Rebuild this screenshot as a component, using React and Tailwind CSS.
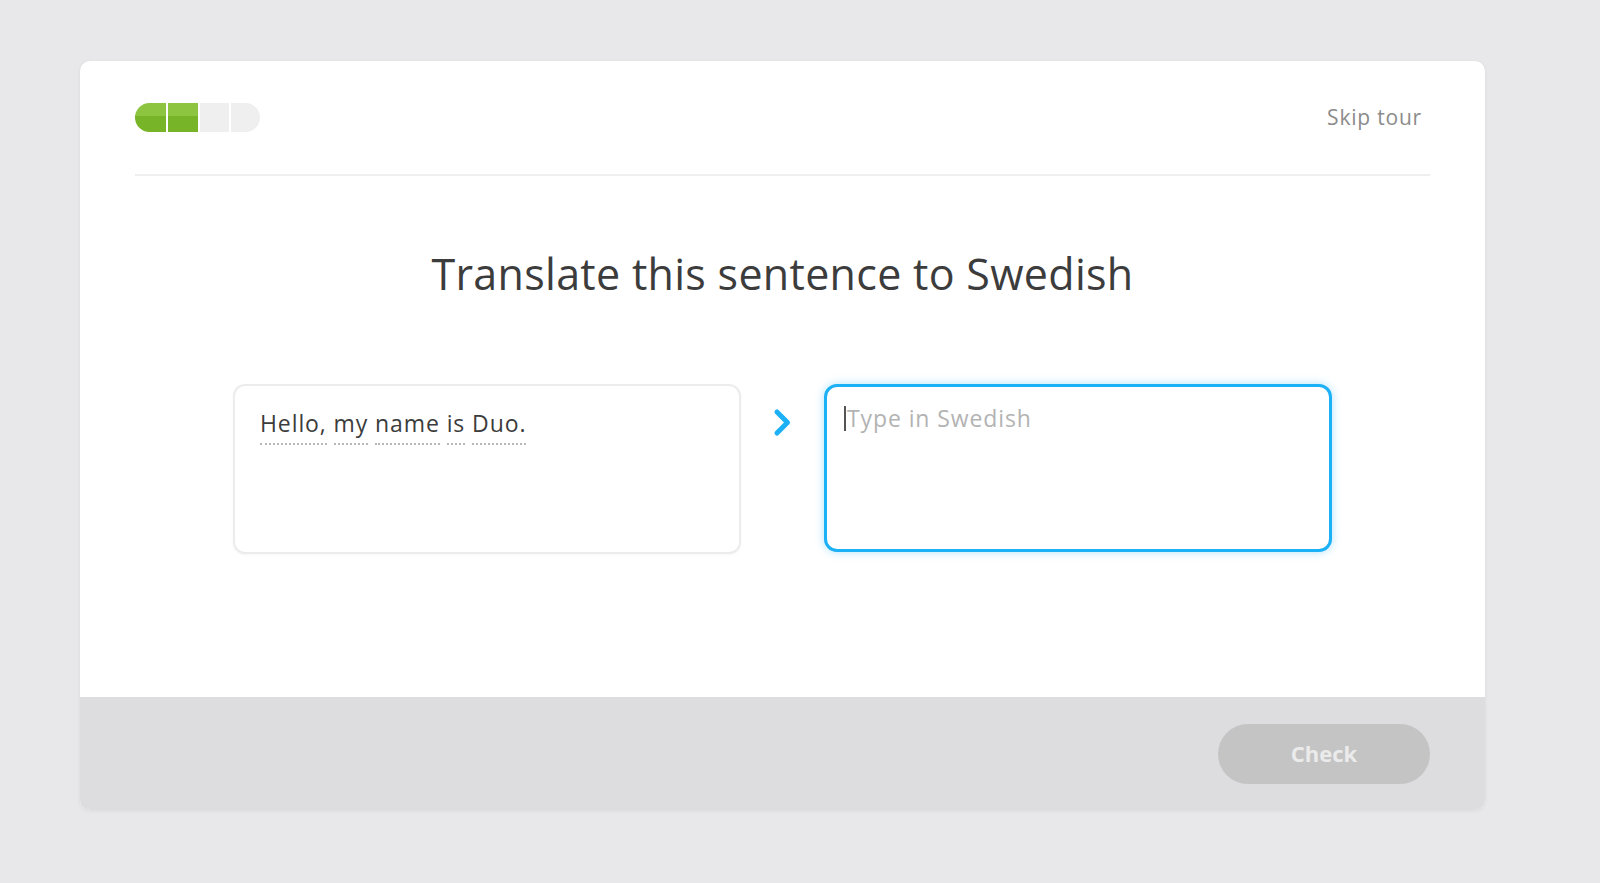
import React from "react";

const font = { fontFamily: "'Open Sans', Lato, 'Noto Sans', sans-serif" };

function Progress() {
  return (
    <div className="flex h-[29px] w-[125px] gap-[2px] overflow-hidden rounded-full">
      <div className="h-full w-[31px] bg-[linear-gradient(to_bottom,#8dc541_0%,#8dc541_45%,#78b427_45%,#78b427_100%)]" />
      <div className="h-full w-[30px] bg-[linear-gradient(to_bottom,#8dc541_0%,#8dc541_45%,#78b427_45%,#78b427_100%)]" />
      <div className="h-full w-[29px] bg-[#efefef]" />
      <div className="h-full w-[29px] bg-[#efefef]" />
    </div>
  );
}

function Word({ children }) {
  return (
    <span className="border-b-[2px] border-dotted border-[#b8b8b8] pb-[4px]">{children}</span>
  );
}

export default function App() {
  return (
    <div className="min-h-screen w-full bg-[#e8e8ea] pl-[80px] pt-[61px]" style={font}>
      <div className="flex h-[749px] w-[1405px] flex-col overflow-hidden rounded-[10px] bg-white shadow-[0_1px_4px_rgba(0,0,0,0.06)]">
        {/* header */}
        <div className="flex h-[113px] items-center justify-between px-[55px]">
          <Progress />
          <span className="mr-[8px] text-[21px] tracking-[0.8px] text-[#8b8b8b]">Skip tour</span>
        </div>
        <div className="mx-[55px] h-[2px] bg-[#efefef]" />

        {/* body */}
        <div className="flex flex-1 flex-col items-center">
          <h1 className="mt-[72px] text-[43px] font-normal leading-[52px] tracking-[0.3px] text-[#3c3c3c]">
            Translate this sentence to Swedish
          </h1>
          <div className="mt-[84px] flex items-start gap-[31px]">
            <div className="h-[170px] w-[508px] rounded-[12px] border-[2px] border-[#ececec] bg-white px-[25px] pt-[20px] shadow-[0_1px_3px_rgba(0,0,0,0.04)]">
              <p className="text-[23px] leading-[34px] tracking-[0.9px] text-[#3c3c3c]">
                <Word>Hello,</Word> <Word>my</Word> <Word>name</Word> <Word>is</Word> <Word>Duo.</Word>
              </p>
            </div>
            <div className="flex h-[170px] items-start pt-[24px]">
              <svg width="21" height="29" viewBox="0 0 21 29" fill="none">
                <polyline points="5,4 15.5,14.5 5,25" stroke="#1cb0f6" strokeWidth="5" strokeLinecap="round" strokeLinejoin="round" />
              </svg>
            </div>
            <div className="h-[168px] w-[508px] rounded-[13px] border-[3px] border-[#1cb0f6] bg-white px-[17px] pt-[14px] shadow-[0_0_10px_rgba(28,176,246,0.35)]">
              <div className="flex items-center">
                <span className="mr-[1px] inline-block h-[25px] w-[2px] bg-[#555]" />
                <span className="text-[23px] leading-[34px] tracking-[0.9px] text-[#b3b3b3]">Type in Swedish</span>
              </div>
            </div>
          </div>
        </div>

        {/* footer */}
        <div className="flex h-[113px] items-center justify-end bg-[#dddcde] px-[55px]">
          <button className="h-[60px] w-[212px] rounded-full bg-[#c4c4c4] text-[22px] font-bold text-[#ebebeb]">
            Check
          </button>
        </div>
      </div>
    </div>
  );
}
